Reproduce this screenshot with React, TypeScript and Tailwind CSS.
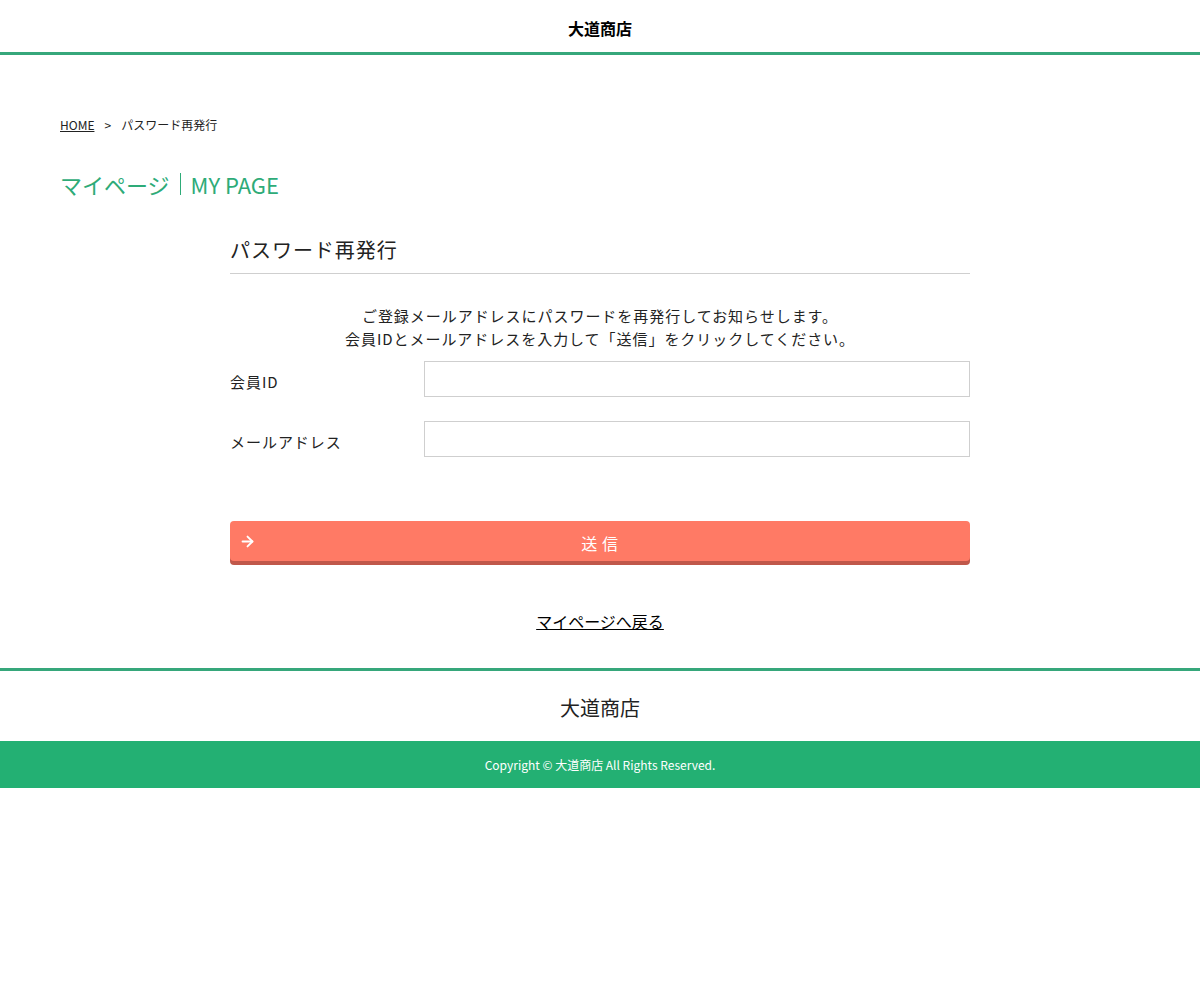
import { ArrowRight } from "lucide-react";

const font = {
  fontFamily: '"Noto Sans CJK JP", "Noto Sans", sans-serif',
};

export default function App() {
  return (
    <div className="min-h-screen bg-white text-[#222]" style={font}>
      {/* HEADER */}
      <header className="h-[55px] border-b-[3px] border-[#36a77b] flex items-center justify-center">
        <h1 className="text-[16px] font-bold text-black leading-none pt-[3px]">大道商店</h1>
      </header>

      <main className="px-[60px] pt-[61px] pb-[35px]">
        {/* Breadcrumb */}
        <nav className="flex items-center text-[12px] leading-[18px] text-[#222]">
          <a href="#" className="underline">HOME</a>
          <span className="ml-[10px] mr-[10px]">&gt;</span>
          <span>パスワード再発行</span>
        </nav>

        {/* Page title */}
        <h2 className="mt-[35px] flex items-center text-[22px] leading-[30px] text-[#2eab78]">
          <span>マイページ</span>
          <span className="mx-[10px] w-px h-[22px] bg-[#2eab78]" />
          <span>MY PAGE</span>
        </h2>

        {/* Form */}
        <section className="w-[740px] mx-auto mt-[36px] tracking-[0.06em]">
          <h3 className="text-[20px] leading-[30px] pb-[8px] border-b border-[#cfcfcf]">
            パスワード再発行
          </h3>

          <p className="mt-[30px] text-center text-[15px] leading-[23px]">
            ご登録メールアドレスにパスワードを再発行してお知らせします。
            <br />
            会員IDとメールアドレスを入力して「送信」をクリックしてください。
          </p>

          <div className="mt-[11px] flex flex-col gap-[24px]">
            <div className="flex items-center">
              <label className="w-[194px] text-[15px] pt-[6px]">会員ID</label>
              <input type="text" className="flex-1 h-[36px] border border-[#cfcfcf] px-2 outline-none" />
            </div>
            <div className="flex items-center">
              <label className="w-[194px] text-[15px] pt-[6px]">メールアドレス</label>
              <input type="email" className="flex-1 h-[36px] border border-[#cfcfcf] px-2 outline-none" />
            </div>
          </div>

          <button className="relative mt-[64px] w-full h-[40px] rounded-[4px] bg-[#ff7a65] shadow-[0_4px_0_#c0584a] text-white text-[16px] tracking-[0.3em] flex items-center justify-center">
            <ArrowRight className="absolute left-[9px] top-[12px] w-[17px] h-[17px]" strokeWidth={2.6} />
            <span className="pl-[4px] pt-[4px]">送信</span>
          </button>

          <div className="mt-[48px] text-center tracking-normal">
            <a href="#" className="text-[16px] leading-[24px] underline text-black">
              マイページへ戻る
            </a>
          </div>
        </section>
      </main>

      {/* FOOTER */}
      <footer className="border-t-[3px] border-[#36a77b]">
        <div className="h-[70px] flex items-center justify-center text-[20px] text-[#222] pt-[4px]">大道商店</div>
        <div className="h-[47px] bg-[#23b073] flex items-center justify-center text-[12px] text-white">
          Copyright © 大道商店 All Rights Reserved.
        </div>
      </footer>
    </div>
  );
}
